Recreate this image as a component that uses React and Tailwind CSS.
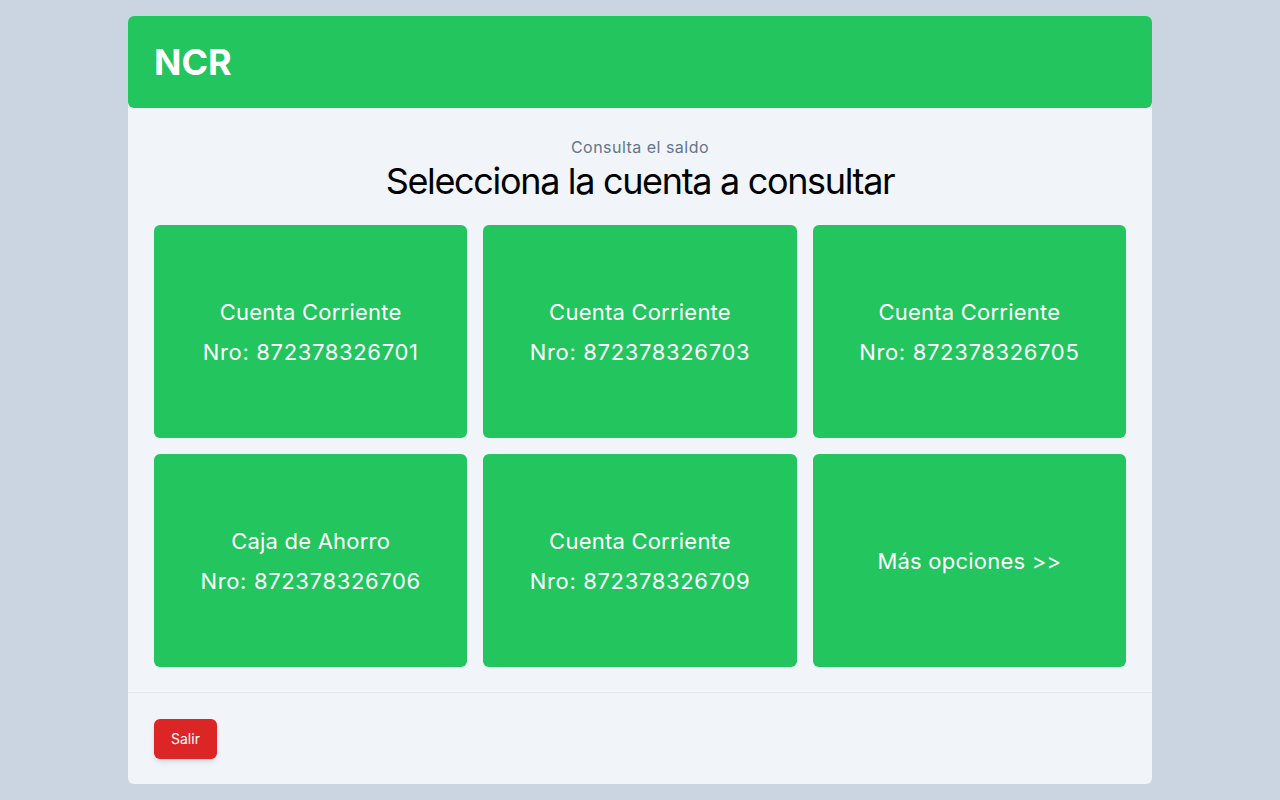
import React from 'react';

const cuentas = [
  { tipo: 'Cuenta Corriente', nro: '872378326701' },
  { tipo: 'Cuenta Corriente', nro: '872378326703' },
  { tipo: 'Cuenta Corriente', nro: '872378326705' },
  { tipo: 'Caja de Ahorro', nro: '872378326706' },
  { tipo: 'Cuenta Corriente', nro: '872378326709' },
];

export default function App() {
  return (
    <div className="min-h-screen bg-[#cbd5e1] py-4" style={{ fontFamily: 'Inter, "Noto Sans", sans-serif' }}>
      <div className="mx-auto w-[1024px] h-[768px] flex flex-col rounded-md bg-[#f1f5f9]">
        {/* cabecera */}
        <div className="bg-[#22c55e] rounded-md px-[26px] py-[26px]">
          <h1 className="text-4xl font-bold text-white">NCR</h1>
        </div>

        <div className="px-[26px] pt-[27px] pb-[25px]">
          <p className="text-center text-base tracking-[0.03em] text-[#64748b]">Consulta el saldo</p>
          <h2 className="mt-[2px] text-center text-4xl tracking-[-0.037em] text-black">Selecciona la cuenta a consultar</h2>

          <div className="mt-6 grid grid-cols-3 gap-4">
            {cuentas.map((c) => (
              <button
                key={c.nro}
                className="h-[213px] rounded-md bg-[#22c55e] text-white text-[22px] tracking-[0.01em] leading-10 flex flex-col items-center justify-center"
              >
                <span>{c.tipo}</span>
                <span className="tracking-[0.03em]">Nro: {c.nro}</span>
              </button>
            ))}
            <button className="h-[213px] rounded-md bg-[#22c55e] text-white text-[22px] tracking-[0.01em] leading-10 flex items-center justify-center">
              Más opciones &gt;&gt;
            </button>
          </div>
        </div>

        <div className="border-t border-[#e2e8f0] px-[26px] pt-[26px]">
          <button className="rounded-md bg-[#dc2626] px-[17px] py-[10px] text-sm text-white shadow-md">Salir</button>
        </div>
      </div>
    </div>
  );
}
